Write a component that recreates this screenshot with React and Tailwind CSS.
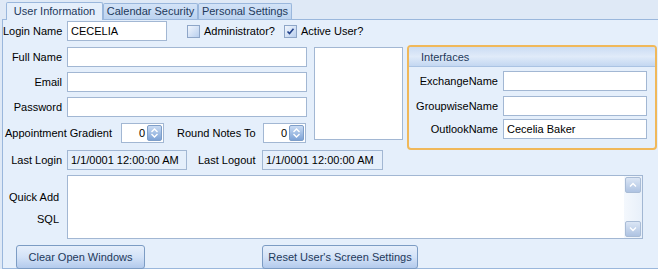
const border = 'border border-[#a2b7d3]'

function Box({ className = '', children }) {
  return (
    <div className={`h-[20px] ${border} bg-white px-[3px] leading-[18px] whitespace-nowrap overflow-hidden ${className}`}>
      {children}
    </div>
  )
}

function Label({ children, className = '' }) {
  return <div className={`w-[59px] shrink-0 text-right leading-[20px] ${className}`}>{children}</div>
}

function Check({ checked }) {
  return (
    <div className="w-[13px] h-[13px] border border-[#8ea6c8] bg-gradient-to-br from-[#f1f6fd] to-[#b9cfee] flex items-center justify-center">
      {checked && (
        <svg width="9" height="9" viewBox="0 0 9 9">
          <path d="M1.5 4.5 L3.5 6.5 L7.5 1.8" fill="none" stroke="#21418a" strokeWidth="1.6" />
        </svg>
      )}
    </div>
  )
}

function Spinner() {
  return (
    <div className={`w-[43px] h-[20px] ${border} bg-white flex items-center`}>
      <div className="flex-1 text-right pr-[2px] leading-[18px]">0</div>
      <div className="w-[15px] h-[16px] mr-[1px] rounded-[2px] border border-[#7f9fc9] bg-gradient-to-b from-[#c9dbf3] to-[#7ea3d6] flex items-center justify-center">
        <svg width="9" height="12" viewBox="0 0 9 12">
          <path d="M1.5 5 L4.5 2 L7.5 5 M1.5 7 L4.5 10 L7.5 7" fill="none" stroke="#ffffff" strokeWidth="1.4" />
        </svg>
      </div>
    </div>
  )
}

function ScrollBtn({ up }) {
  return (
    <div className="w-[16px] h-[16px] rounded-[2px] border border-[#a9bcd6] bg-gradient-to-b from-[#dbe6f5] to-[#aec3e2] flex items-center justify-center">
      <svg width="8" height="6" viewBox="0 0 8 6">
        <path d={up ? 'M1 4.5 L4 1.5 L7 4.5' : 'M1 1.5 L4 4.5 L7 1.5'} fill="none" stroke="#ffffff" strokeWidth="1.4" />
      </svg>
    </div>
  )
}

function Button({ className = '', children }) {
  return (
    <div className={`h-[24px] rounded-[3px] border border-[#7c9cc4] bg-gradient-to-b from-[#e6effb] via-[#d3e2f7] to-[#b3caec] text-[#1e395b] flex items-center justify-center ${className}`}>
      {children}
    </div>
  )
}

export default function App() {
  return (
    <div className="w-[658px] h-[269px] overflow-hidden whitespace-nowrap bg-[#dfe9f6] font-['Liberation_Sans',Arial,sans-serif] text-[11px] text-black">
      {/* tabs */}
      <div className="h-[19px] flex items-end pl-[6px] text-[#1e395b]">
        <div className="h-[18px] w-[97px] bg-[#e5effb] border border-b-0 border-[#9ab7dc] rounded-t-[2px] flex items-center justify-center relative top-[1px] z-10">
          User Information
        </div>
        <div className="h-[16px] w-[95px] bg-gradient-to-b from-[#d3e3f7] to-[#bcd3f0] border border-b-0 border-[#9ab7dc] rounded-t-[2px] flex items-center justify-center">
          Calendar Security
        </div>
        <div className="h-[16px] w-[94px] bg-gradient-to-b from-[#d3e3f7] to-[#bcd3f0] border border-b-0 border-[#9ab7dc] rounded-t-[2px] flex items-center justify-center">
          Personal Settings
        </div>
      </div>

      {/* panel */}
      <div className="ml-[2px] h-[250px] border-l border-t border-b border-[#9ab7dc] bg-[#e5effb] flex flex-col">
        {/* login row */}
        <div className="mt-[1px] flex items-center h-[20px]">
          <Label>Login Name</Label>
          <Box className="ml-[5px] w-[100px]">CECELIA</Box>
          <div className="ml-[20px]"><Check /></div>
          <div className="ml-[4px] w-[80px]">Administrator?</div>
          <div><Check checked /></div>
          <div className="ml-[4px]">Active User?</div>
        </div>

        {/* middle block */}
        <div className="mt-[4px] h-[105px] flex">
          <div className="w-[403px] pt-[2px] flex">
            <div className="w-[307px] flex flex-col">
              <div className="flex h-[20px]">
                <Label>Full Name</Label>
                <Box className="ml-[5px] w-[240px]" />
              </div>
              <div className="flex h-[20px] mt-[5px]">
                <Label>Email</Label>
                <Box className="ml-[5px] w-[240px]" />
              </div>
              <div className="flex h-[20px] mt-[5px]">
                <Label>Password</Label>
                <Box className="ml-[5px] w-[240px]" />
              </div>
              <div className="flex items-center h-[20px] mt-[6px]">
                <div className="ml-[2px] w-[116px] leading-[20px]">Appointment Gradient</div>
                <Spinner />
                <div className="ml-[13px] w-[86px] leading-[20px]">Round Notes To</div>
                <Spinner />
              </div>
            </div>
            <div className={`ml-[4px] w-[89px] h-[93px] ${border} bg-white`} />
          </div>

          {/* interfaces group */}
          <div className="ml-[1px] w-[250px] h-[105px] border-2 border-[#f0b85a] rounded-[4px] flex flex-col">
            <div className="h-[20px] border-b border-[#aac3e3] bg-gradient-to-b from-[#cbdcf3] via-[#e0ebf9] to-[#c3d7f1] text-[#1e395b] pl-[12px] leading-[20px] rounded-t-[2px]">
              Interfaces
            </div>
            <div className="flex h-[20px] mt-[4px]">
              <div className="w-[89px] text-right leading-[20px]">ExchangeName</div>
              <Box className="ml-[5px] w-[144px]" />
            </div>
            <div className="flex h-[20px] mt-[5px]">
              <div className="w-[89px] text-right leading-[20px]">GroupwiseName</div>
              <Box className="ml-[5px] w-[144px]" />
            </div>
            <div className="flex h-[20px] mt-[3px]">
              <div className="w-[89px] text-right leading-[20px]">OutlookName</div>
              <Box className="ml-[5px] w-[144px]">Cecelia Baker</Box>
            </div>
          </div>
        </div>

        {/* last login row */}
        <div className="flex items-center h-[20px]">
          <Label>Last Login</Label>
          <div className={`ml-[5px] w-[120px] h-[20px] ${border} px-[3px] leading-[18px]`}>1/1/0001 12:00:00 AM</div>
          <div className="ml-[11px] w-[64px] leading-[20px]">Last Logout</div>
          <div className={`w-[121px] h-[20px] ${border} px-[3px] leading-[18px]`}>1/1/0001 12:00:00 AM</div>
        </div>

        {/* quick add sql */}
        <div className="mt-[5px] flex h-[64px]">
          <div className="w-[56px] shrink-0 text-right pt-[11px] leading-[22px]">
            <div className="text-left pl-[6px]">Quick Add</div>
            <div>SQL</div>
          </div>
          <div className={`ml-[8px] w-[576px] h-[64px] ${border} bg-white flex justify-end`}>
            <div className="w-[18px] bg-gradient-to-r from-[#f4f8fd] to-[#e8f0fa] flex flex-col justify-between items-center py-[1px]">
              <ScrollBtn up />
              <ScrollBtn />
            </div>
          </div>
        </div>

        {/* buttons */}
        <div className="mt-[6px] flex">
          <Button className="ml-[13px] w-[129px]">Clear Open Windows</Button>
          <Button className="ml-[117px] w-[156px]">Reset User's Screen Settings</Button>
        </div>
      </div>
    </div>
  )
}
